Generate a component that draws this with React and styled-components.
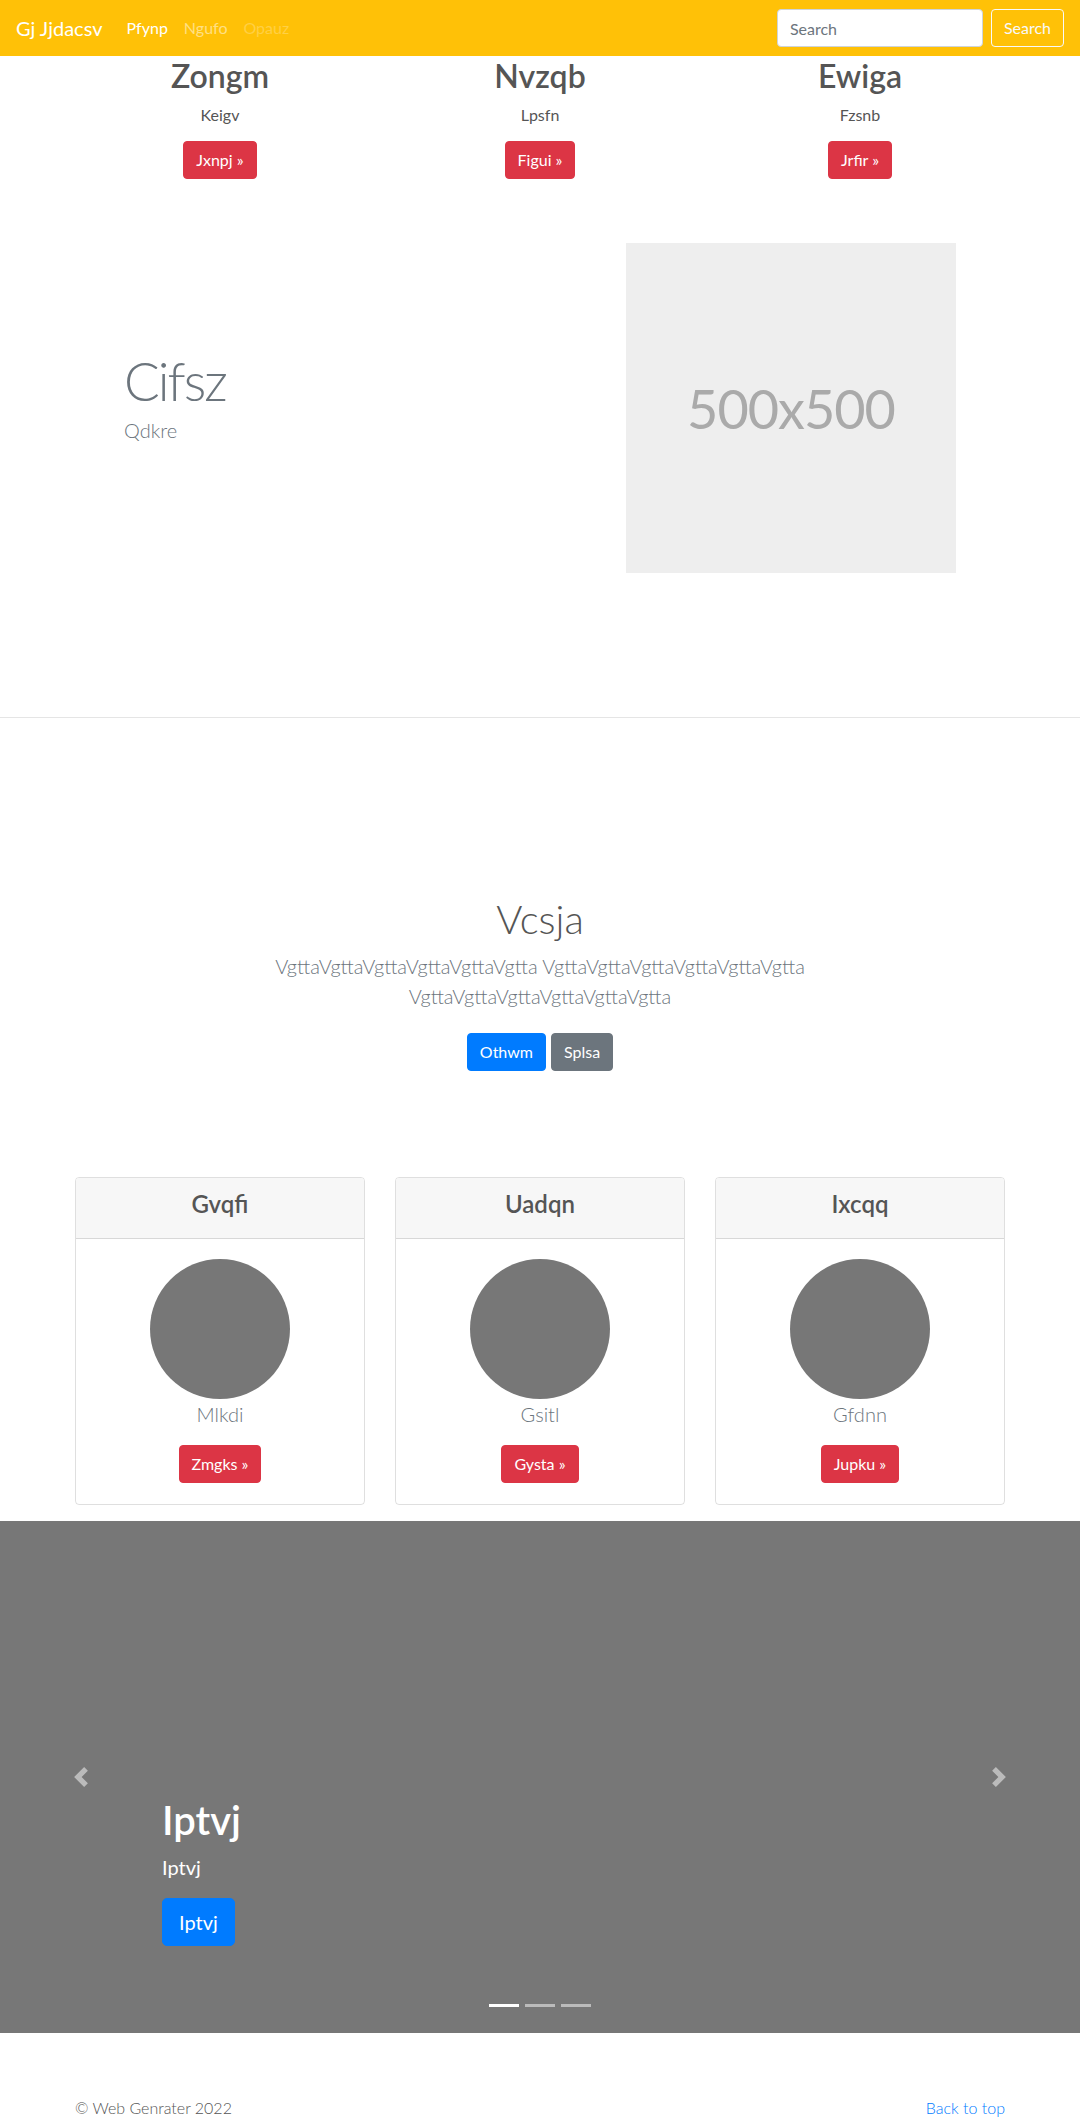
import React from "react";
import styled, { createGlobalStyle } from "styled-components";

const FONT = `"Segoe UI", Lato, "Liberation Sans", sans-serif`;

const GlobalStyle = createGlobalStyle`
  html, body { margin: 0; padding: 0; }
  body {
    font-family: ${FONT};
    font-size: 16px;
    line-height: 1.5;
    color: #555;
    background: #fff;
  }
  * { box-sizing: border-box; }
`;

/* ---------- Navbar ---------- */
const Navbar = styled.nav`
  height: 56px;
  display: flex;
  align-items: center;
  padding: 8px 16px;
  background: #ffc107;
`;

const Brand = styled.a`
  font-size: 20px;
  line-height: 30px;
  padding: 5px 0;
  margin-right: 16px;
  color: #fff;
  text-decoration: none;
  white-space: nowrap;
`;

const NavList = styled.div`
  display: flex;
  align-items: center;
`;

const navColors = {
  active: "#fff",
  normal: "rgba(255,255,255,0.5)",
  disabled: "rgba(255,255,255,0.25)",
};

const NavLink = styled.a`
  padding: 8px;
  font-size: 16px;
  line-height: 24px;
  color: ${(p) => navColors[p.$state]};
  text-decoration: none;
`;

const SearchForm = styled.form`
  margin-left: auto;
  display: flex;
  align-items: center;
  gap: 8px;
`;

const SearchInput = styled.input`
  width: 206px;
  height: 38px;
  padding: 6px 12px;
  font-family: ${FONT};
  font-size: 16px;
  color: #495057;
  background: #fff;
  border: 1px solid #ced4da;
  border-radius: 4px;
  outline: none;
  &::placeholder { color: #6c757d; }
`;

const OutlineButton = styled.button`
  height: 38px;
  padding: 6px 12px;
  font-family: ${FONT};
  font-size: 16px;
  line-height: 24px;
  color: #f8f9fa;
  background: transparent;
  border: 1px solid #f8f9fa;
  border-radius: 4px;
`;

/* ---------- Shared ---------- */
const Container = styled.div`
  width: 930px;
  margin: 0 auto;
`;

const btnColors = {
  danger: "#dc3545",
  primary: "#007bff",
  secondary: "#6c757d",
};

const Button = styled.a`
  display: inline-block;
  padding: ${(p) => (p.$lg ? "8px 16px" : "6px 12px")};
  font-size: ${(p) => (p.$lg ? "20px" : "16px")};
  line-height: ${(p) => (p.$lg ? "30px" : "24px")};
  border-radius: ${(p) => (p.$lg ? "5px" : "4px")};
  color: #fff;
  background: ${(p) => btnColors[p.$variant]};
  border: 1px solid ${(p) => btnColors[p.$variant]};
  text-decoration: none;
  white-space: nowrap;
`;

/* ---------- Top columns ---------- */
const ColumnsGrid = styled.div`
  display: grid;
  grid-template-columns: repeat(3, 1fr);
  column-gap: 30px;
  text-align: center;
`;

const Column = styled.div``;

const ColumnTitle = styled.h2`
  margin: 1px 0 8px;
  font-size: 32px;
  font-weight: 600;
  line-height: 1.2;
  color: #555;
`;

const ColumnText = styled.p`
  margin: 0 0 14px;
  font-size: 16px;
  line-height: 24px;
  color: #555;
`;

/* ---------- Featurette ---------- */
const Featurette = styled.section`
  display: flex;
  align-items: center;
  justify-content: space-between;
  padding: 64px 124px 144px;
`;

const FeatureText = styled.div`
  display: flex;
  flex-direction: column;
  padding-bottom: 8px;
`;

const FeatureHeading = styled.h2`
  margin: 0;
  font-size: 53px;
  font-weight: 300;
  line-height: 1.25;
  letter-spacing: -2px;
  color: #6c757d;
`;

const FeatureLead = styled.p`
  margin: 0 0 16px;
  font-size: 20px;
  font-weight: 300;
  line-height: 30px;
  color: #6c757d;
`;

const Placeholder = styled.div`
  width: 330px;
  height: 330px;
  background: #eee;
  display: flex;
  align-items: center;
  justify-content: center;
  font-size: 54px;
  letter-spacing: -1px;
  color: #aaa;
`;

/* ---------- Jumbotron ---------- */
const Jumbotron = styled.section`
  border-top: 1px solid #e5e5e5;
  padding: 177px 0 82px;
  text-align: center;
`;

const JumboTitle = styled.h1`
  margin: 0 0 8px;
  font-size: 40px;
  font-weight: 300;
  line-height: 1.2;
  color: #555;
`;

const JumboLead = styled.p`
  max-width: 610px;
  margin: 0 auto;
  font-size: 20px;
  font-weight: 300;
  line-height: 30px;
  color: #6c757d;
`;

const ButtonRow = styled.div`
  display: flex;
  justify-content: center;
  gap: 5px;
  margin: 22px 0 24px;
`;

/* ---------- Cards ---------- */
const CardsGrid = styled.div`
  display: grid;
  grid-template-columns: repeat(3, 1fr);
  column-gap: 30px;
  text-align: center;
`;

const Card = styled.div`
  margin-bottom: 16px;
  border: 1px solid rgba(0, 0, 0, 0.125);
  border-radius: 4px;
  overflow: hidden;
`;

const CardHeader = styled.div`
  padding: 12px 20px 7px;
  background: #f7f7f7;
  border-bottom: 1px solid rgba(0, 0, 0, 0.125);
`;

const CardTitle = styled.h4`
  margin: 0 0 12px;
  font-size: 24px;
  font-weight: 600;
  line-height: 1.2;
  color: #555;
`;

const CardBody = styled.div`
  padding: 20px 20px 21px;
  display: flex;
  flex-direction: column;
  align-items: center;
`;

const Avatar = styled.div`
  width: 140px;
  height: 140px;
  border-radius: 50%;
  background: #777;
`;

const CardText = styled.p`
  margin: 0 0 16px;
  font-size: 20px;
  font-weight: 300;
  line-height: 30px;
  color: #6c757d;
`;

/* ---------- Carousel ---------- */
const Carousel = styled.section`
  position: relative;
  height: 512px;
  background: #777;
  overflow: hidden;
`;

const Slide = styled.div`
  height: 100%;
  display: flex;
  flex-direction: column;
  justify-content: flex-end;
  padding: 0 15% 71px;
  color: #fff;
`;

const CaptionTitle = styled.h1`
  margin: 0 0 8px;
  font-size: 40px;
  font-weight: 600;
  line-height: 1.2;
  color: #fff;
`;

const CaptionText = styled.p`
  margin: 0 0 16px;
  font-size: 20px;
  line-height: 30px;
`;

const CaptionAction = styled.div`
  margin-bottom: 16px;
`;

const Control = styled.a`
  position: absolute;
  top: 0;
  bottom: 0;
  ${(p) => (p.$side === "left" ? "left: 0;" : "right: 0;")}
  width: 15%;
  display: flex;
  align-items: center;
  justify-content: center;
  opacity: 0.5;
`;

const Indicators = styled.ol`
  position: absolute;
  left: 0;
  right: 0;
  bottom: 0;
  margin: 0 0 16px;
  padding: 0;
  list-style: none;
  display: flex;
  justify-content: center;
`;

const Indicator = styled.li`
  width: 30px;
  height: 3px;
  margin: 0 3px;
  box-sizing: content-box;
  border-top: 10px solid transparent;
  border-bottom: 10px solid transparent;
  background: #fff;
  background-clip: padding-box;
  opacity: ${(p) => (p.$active ? 1 : 0.5)};
`;

/* ---------- Footer ---------- */
const Footer = styled.footer`
  padding: 63px 0 40px;
`;

const FooterRow = styled.div`
  display: flex;
  justify-content: space-between;
  font-size: 16px;
  line-height: 24px;
  font-weight: 300;
`;

const FooterText = styled.p`
  margin: 0;
  color: #555;
`;

const FooterLink = styled.a`
  color: #007bff;
  text-decoration: none;
`;

const Chevron = ({ dir }) => (
  <svg width="20" height="20" viewBox="0 0 8 8" fill="#fff">
    {dir === "left" ? (
      <path d="M5.25 0l-4 4 4 4 1.5-1.5L4.25 4l2.5-2.5L5.25 0z" />
    ) : (
      <path d="M2.75 0l-1.5 1.5L3.75 4l-2.5 2.5L2.75 8l4-4-4-4z" />
    )}
  </svg>
);

const columns = [
  { title: "Zongm", text: "Keigv", btn: "Jxnpj" },
  { title: "Nvzqb", text: "Lpsfn", btn: "Figui" },
  { title: "Ewiga", text: "Fzsnb", btn: "Jrfir" },
];

const cards = [
  { title: "Gvqfi", text: "Mlkdi", btn: "Zmgks" },
  { title: "Uadqn", text: "Gsitl", btn: "Gysta" },
  { title: "Ixcqq", text: "Gfdnn", btn: "Jupku" },
];

export default function App() {
  const word = "Vgtta".repeat(6);
  return (
    <>
      <GlobalStyle />
      <Navbar>
        <Brand href="#">Gj Jjdacsv</Brand>
        <NavList>
          <NavLink $state="active" href="#">Pfynp</NavLink>
          <NavLink $state="normal" href="#">Ngufo</NavLink>
          <NavLink $state="disabled" href="#">Opauz</NavLink>
        </NavList>
        <SearchForm onSubmit={(e) => e.preventDefault()}>
          <SearchInput type="text" placeholder="Search" />
          <OutlineButton type="submit">Search</OutlineButton>
        </SearchForm>
      </Navbar>

      <Container>
        <ColumnsGrid>
          {columns.map((c) => (
            <Column key={c.title}>
              <ColumnTitle>{c.title}</ColumnTitle>
              <ColumnText>{c.text}</ColumnText>
              <Button $variant="danger" href="#">{c.btn} »</Button>
            </Column>
          ))}
        </ColumnsGrid>
      </Container>

      <Featurette>
        <FeatureText>
          <FeatureHeading>Cifsz</FeatureHeading>
          <FeatureLead>Qdkre</FeatureLead>
        </FeatureText>
        <Placeholder>500x500</Placeholder>
      </Featurette>

      <Jumbotron>
        <JumboTitle>Vcsja</JumboTitle>
        <JumboLead>
          {word} {word} {word}
        </JumboLead>
        <ButtonRow>
          <Button $variant="primary" href="#">Othwm</Button>
          <Button $variant="secondary" href="#">Splsa</Button>
        </ButtonRow>
      </Jumbotron>

      <Container>
        <CardsGrid>
          {cards.map((c) => (
            <Card key={c.title}>
              <CardHeader>
                <CardTitle>{c.title}</CardTitle>
              </CardHeader>
              <CardBody>
                <Avatar />
                <CardText>{c.text}</CardText>
                <Button $variant="danger" href="#">{c.btn} »</Button>
              </CardBody>
            </Card>
          ))}
        </CardsGrid>
      </Container>

      <Carousel>
        <Slide>
          <CaptionTitle>Iptvj</CaptionTitle>
          <CaptionText>Iptvj</CaptionText>
          <CaptionAction>
            <Button $variant="primary" $lg href="#">Iptvj</Button>
          </CaptionAction>
        </Slide>
        <Control $side="left" href="#"><Chevron dir="left" /></Control>
        <Control $side="right" href="#"><Chevron dir="right" /></Control>
        <Indicators>
          <Indicator $active />
          <Indicator />
          <Indicator />
        </Indicators>
      </Carousel>

      <Footer>
        <Container>
          <FooterRow>
            <FooterText>© Web Genrater 2022</FooterText>
            <FooterLink href="#">Back to top</FooterLink>
          </FooterRow>
        </Container>
      </Footer>
    </>
  );
}
